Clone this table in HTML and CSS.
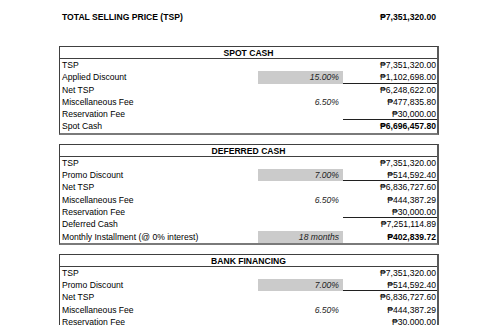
FILE: index.html
```html
<!DOCTYPE html>
<html>
<head>
<meta charset="utf-8">
<link rel="stylesheet" href="styles.css">
</head>
<body>
<div class="page">
  <div class="title">
    <span>TOTAL SELLING PRICE (TSP)</span>
    <span>₱7,351,320.00</span>
  </div>

  <div class="sheet">
    <div class="hdr">SPOT CASH</div>
    <div class="rows">
      <div class="lbl">TSP</div><div class="pct"></div><div class="val">₱7,351,320.00</div>
      <div class="lbl">Applied Discount</div><div class="pct gray">15.00%</div><div class="val line">₱1,102,698.00</div>
      <div class="lbl">Net TSP</div><div class="pct"></div><div class="val">₱6,248,622.00</div>
      <div class="lbl">Miscellaneous Fee</div><div class="pct">6.50%</div><div class="val">₱477,835.80</div>
      <div class="lbl">Reservation Fee</div><div class="pct"></div><div class="val line">₱30,000.00</div>
      <div class="lbl">Spot Cash</div><div class="pct"></div><div class="val bold">₱6,696,457.80</div>
    </div>
  </div>

  <div class="sheet">
    <div class="hdr">DEFERRED CASH</div>
    <div class="rows">
      <div class="lbl">TSP</div><div class="pct"></div><div class="val">₱7,351,320.00</div>
      <div class="lbl">Promo Discount</div><div class="pct gray">7.00%</div><div class="val line">₱514,592.40</div>
      <div class="lbl">Net TSP</div><div class="pct"></div><div class="val">₱6,836,727.60</div>
      <div class="lbl">Miscellaneous Fee</div><div class="pct">6.50%</div><div class="val">₱444,387.29</div>
      <div class="lbl">Reservation Fee</div><div class="pct"></div><div class="val line">₱30,000.00</div>
      <div class="lbl">Deferred Cash</div><div class="pct"></div><div class="val">₱7,251,114.89</div>
      <div class="lbl">Monthly Installment (@ 0% interest)</div><div class="pct gray">18 months</div><div class="val bold">₱402,839.72</div>
    </div>
  </div>

  <div class="sheet">
    <div class="hdr">BANK FINANCING</div>
    <div class="rows">
      <div class="lbl">TSP</div><div class="pct"></div><div class="val">₱7,351,320.00</div>
      <div class="lbl">Promo Discount</div><div class="pct gray">7.00%</div><div class="val line">₱514,592.40</div>
      <div class="lbl">Net TSP</div><div class="pct"></div><div class="val">₱6,836,727.60</div>
      <div class="lbl">Miscellaneous Fee</div><div class="pct">6.50%</div><div class="val">₱444,387.29</div>
      <div class="lbl">Reservation Fee</div><div class="pct"></div><div class="val line">₱30,000.00</div>
      <div class="lbl">Spot Cash</div><div class="pct"></div><div class="val">₱6,696,457.80</div>
    </div>
  </div>
</div>
</body>
</html>
```

FILE: styles.css
```css
html, body {
  margin: 0;
  padding: 0;
  background: #ffffff;
}
body {
  font-family: "Liberation Sans", Arial, "DejaVu Sans", sans-serif;
  font-size: 8.6px;
  color: #000000;
  overflow: hidden;
}
.page {
  padding: 11px 0 0 59px;
  width: 380px;
}
.title {
  display: flex;
  justify-content: space-between;
  font-weight: bold;
  height: 12px;
  line-height: 12px;
  padding: 0 3px 0 3px;
  margin-bottom: 23px;
}
.sheet {
  width: 380px;
  box-sizing: border-box;
  border: 1px solid #404040;
  border-right: 2px solid #5a5a5a;
  border-bottom: 2px solid #7a7a7a;
  margin-bottom: 9px;
}
.hdr {
  height: 11px;
  line-height: 12px;
  text-align: center;
  font-weight: bold;
  border-bottom: 1px solid #404040;
}
.rows {
  display: grid;
  grid-template-columns: 198px 85px 94px;
  grid-auto-rows: 12.3px;
}
.rows > div {
  line-height: 12.3px;
  white-space: nowrap;
  box-sizing: border-box;
}
.lbl {
  padding-left: 2px;
}
.pct {
  text-align: right;
  font-style: italic;
  padding-right: 4px;
  color: #1e1e1e;
}
.gray {
  background: #cbcbcb;
}
.val {
  text-align: right;
  padding-right: 1px;
}
.line {
  border-bottom: 1px solid #202020;
}
.bold {
  font-weight: bold;
}
```
